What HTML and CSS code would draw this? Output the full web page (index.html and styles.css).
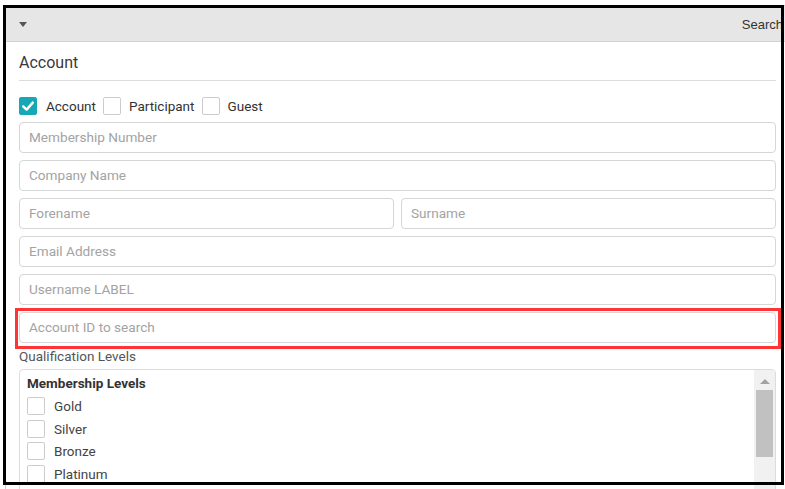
FILE: index.html
```html
<!DOCTYPE html>
<html>
<head>
<meta charset="utf-8">
<link rel="stylesheet" href="styles.css">
</head>
<body>
<div class="panel">
  <div class="panel-header">
    <span class="caret"></span>
    <span class="header-title">Search</span>
  </div>
  <div class="panel-body">
    <div class="section-title">Account</div>
    <div class="type-row">
      <label class="check"><span class="box checked"><svg viewBox="0 0 18 18" width="18" height="18"><path d="M4.2 9.4 L7.6 12.6 L13.8 5.6" fill="none" stroke="#fff" stroke-width="2.4" stroke-linecap="round" stroke-linejoin="round"/></svg></span><span class="check-label">Account</span></label>
      <label class="check"><span class="box"></span><span class="check-label">Participant</span></label>
      <label class="check"><span class="box"></span><span class="check-label">Guest</span></label>
    </div>
    <div class="field"><div class="input">Membership Number</div></div>
    <div class="field"><div class="input">Company Name</div></div>
    <div class="field split"><div class="input">Forename</div><div class="input">Surname</div></div>
    <div class="field"><div class="input">Email Address</div></div>
    <div class="field"><div class="input">Username LABEL</div></div>
    <div class="field highlight"><div class="input">Account ID to search</div></div>
    <div class="group-label">Qualification Levels</div>
    <div class="listbox">
      <div class="list-content">
        <div class="list-heading">Membership Levels</div>
        <div class="option"><span class="box"></span><span>Gold</span></div>
        <div class="option"><span class="box"></span><span>Silver</span></div>
        <div class="option"><span class="box"></span><span>Bronze</span></div>
        <div class="option"><span class="box"></span><span>Platinum</span></div>
      </div>
      <div class="scrollbar">
        <div class="arrow"></div>
        <div class="thumb"></div>
      </div>
    </div>
  </div>
</div>
<div class="frame"></div>
</body>
</html>
```
FILE: styles.css
```css
html, body {
  margin: 0;
  padding: 0;
  background: #fff;
  overflow: hidden;
  height: 489px;
}
body {
  font-family: Roboto, "Liberation Sans", sans-serif;
  color: #333;
}
.panel {
  margin: 5px 0 0 5px;
  width: 785px;
  box-sizing: border-box;
  border: 1px solid #d0d0d0;
}
.panel-header {
  height: 35px;
  background: #e6e6e6;
  border-bottom: 1px solid #d2d2d2;
  display: flex;
  align-items: center;
  justify-content: space-between;
  padding: 0 6px 0 13px;
}
.caret {
  width: 0;
  height: 0;
  border-left: 4px solid transparent;
  border-right: 4px solid transparent;
  border-top: 5px solid #555;
  margin-top: 1px;
}
.header-title {
  font-family: "Liberation Sans", Arial, sans-serif;
  font-size: 13px;
  color: #333;
  margin-top: 1px;
}
.panel-body {
  padding: 0 13px;
}
.section-title {
  font-size: 16px;
  font-weight: 400;
  color: #3a3a3a;
  height: 38px;
  line-height: 41px;
  border-bottom: 1px solid #dcdcdc;
}
.type-row {
  display: flex;
  align-items: center;
  margin-top: 16px;
  height: 18px;
}
.check {
  display: flex;
  align-items: center;
  margin-right: 7px;
}
.box {
  width: 18px;
  height: 18px;
  box-sizing: border-box;
  border: 1px solid #ccc;
  border-radius: 2px;
  background: #fff;
  display: inline-block;
  flex: none;
}
.box.checked {
  background: #17a8b6;
  border-color: #17a8b6;
  position: relative;
}
.box.checked svg {
  position: absolute;
  left: -1px;
  top: -1px;
}
.check-label {
  margin-left: 9px;
  font-size: 13.5px;
  color: #333;
}
.check + .check .check-label {
  margin-left: 8px;
}
.type-row + .field {
  margin-top: 7px;
}
.field {
  display: flex;
  gap: 7px;
  margin-bottom: 7px;
}
.input {
  flex: 1;
  height: 31px;
  box-sizing: border-box;
  border: 1px solid #d6d6d6;
  border-radius: 4px;
  padding: 0 9px;
  font-size: 13.6px;
  color: #a3a3a3;
  line-height: 29px;
  background: #fff;
}
.highlight {
  position: relative;
}
.highlight::after {
  content: "";
  position: absolute;
  left: -4px;
  top: -4px;
  right: -5px;
  bottom: -6px;
  border: 3px solid #fd3535;
  pointer-events: none;
}
.group-label {
  font-size: 13.5px;
  color: #555;
  margin-top: -2px;
  line-height: 17px;
}
.listbox {
  margin-top: 4px;
  height: 130px;
  border: 1px solid #dcdcdc;
  border-radius: 4px;
  display: flex;
  overflow: hidden;
}
.list-content {
  flex: 1;
  padding: 5px 7px;
}
.list-heading {
  font-size: 13.5px;
  font-weight: 700;
  color: #333;
  line-height: 17px;
  margin-bottom: 3px;
}
.option {
  display: flex;
  align-items: center;
  height: 22.5px;
  font-size: 13.5px;
  color: #444;
}
.option .box {
  margin-right: 9px;
}
.scrollbar {
  width: 21px;
  background: #f1f1f1;
  display: flex;
  flex-direction: column;
  align-items: center;
}
.arrow {
  margin-top: 9px;
  width: 0;
  height: 0;
  border-left: 5px solid transparent;
  border-right: 5px solid transparent;
  border-bottom: 5px solid #a3a3a3;
}
.thumb {
  margin-top: 6px;
  width: 17px;
  height: 67px;
  background: #c1c1c1;
}
.frame {
  position: absolute;
  left: 3px;
  top: 5px;
  width: 781px;
  height: 480px;
  box-sizing: border-box;
  border: 3px solid #000;
  pointer-events: none;
}
```
